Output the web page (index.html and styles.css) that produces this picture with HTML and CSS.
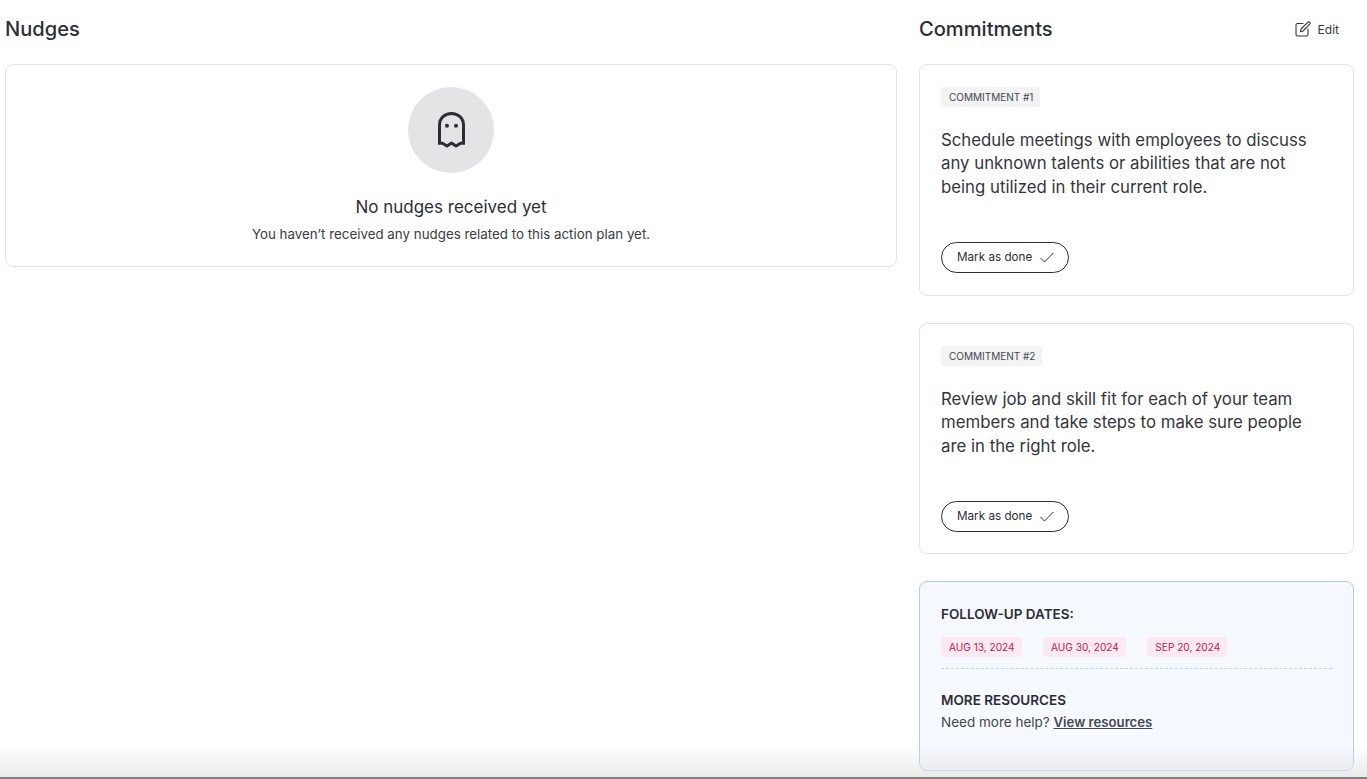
FILE: index.html
```html
<!DOCTYPE html>
<html lang="en">
<head>
<meta charset="utf-8">
<title>Action plan</title>
<link rel="stylesheet" href="styles.css">
</head>
<body>
<div class="page">
  <section class="col-left">
    <header class="col-head"><h2>Nudges</h2></header>
    <div class="card empty">
      <div class="ghost-wrap">
        <svg class="ghost" width="27" height="36" viewBox="0 0 27 36" fill="none">
          <path d="M1.500 32V13C1.500 6 7 1.500 13.500 1.500S25.500 6 25.500 13V32" stroke="#2b2e36" stroke-width="3"/>
          <path d="M0 31.300H4.500L9 34 13.500 31 18 34 22.500 31.300H27" stroke="#2b2e36" stroke-width="3" stroke-linejoin="round"/>
          <circle cx="9" cy="13.700" r="2" fill="#2b2e36"/>
          <circle cx="18" cy="13.700" r="2" fill="#2b2e36"/>
        </svg>
      </div>
      <h3>No nudges received yet</h3>
      <p>You haven’t received any nudges related to this action plan yet.</p>
    </div>
  </section>
  <section class="col-right">
    <header class="col-head">
      <h2>Commitments</h2>
      <a class="edit">
        <svg width="16" height="16" viewBox="0 0 16 16" fill="none" stroke="#33363d" stroke-width="1.100" stroke-linecap="round" stroke-linejoin="round">
          <path d="M8 2.500H2.500A1.500 1.500 0 0 0 1 4V13.500A1.500 1.500 0 0 0 2.500 15H11.500A1.500 1.500 0 0 0 13 13.500V8"/>
          <path d="M5.500 10.800L6 8 12.700 1.300A1.300 1.300 0 0 1 14.700 3.300L8 10Z"/>
        </svg>
        <span>Edit</span>
      </a>
    </header>
    <article class="card commitment">
      <span class="chip">COMMITMENT #1</span>
      <p class="body">Schedule meetings with employees to discuss any unknown talents or abilities that are not being utilized in their current role.</p>
      <button class="done">Mark as done
        <svg width="14" height="11" viewBox="0 0 14 11" fill="none" stroke="#2b2e36" stroke-width="1"><path d="M.5 6 4.500 10 13.500 .8"/></svg>
      </button>
    </article>
    <article class="card commitment">
      <span class="chip">COMMITMENT #2</span>
      <p class="body">Review job and skill fit for each of your team members and take steps to make sure people are in the right role.</p>
      <button class="done">Mark as done
        <svg width="14" height="11" viewBox="0 0 14 11" fill="none" stroke="#2b2e36" stroke-width="1"><path d="M.5 6 4.500 10 13.500 .8"/></svg>
      </button>
    </article>
    <aside class="card info">
      <h4>FOLLOW-UP DATES:</h4>
      <div class="dates">
        <span class="date">AUG 13, 2024</span>
        <span class="date">AUG 30, 2024</span>
        <span class="date">SEP 20, 2024</span>
      </div>
      <hr class="dash">
      <h4>MORE RESOURCES</h4>
      <p class="help">Need more help? <a class="link">View resources</a></p>
    </aside>
  </section>
</div>
<div class="bottom-shade"></div>
</body>
</html>
```
FILE: styles.css
```css
* { box-sizing: border-box; }
html, body { margin: 0; height: 100%; overflow: hidden; background: #fff; }
body { font-family: "Inter", "Liberation Sans", sans-serif; color: #2b2e36; }

.page { display: flex; gap: 22px; padding: 0 13px 0 5px; height: 779px; }
.col-left { width: 892px; flex: none; }
.col-right { width: 435px; flex: none; display: flex; flex-direction: column; }

.col-head { height: 64px; display: flex; align-items: center; justify-content: space-between; padding-bottom: 6px; }
.col-head h2 { margin: 0; font-size: 20.100px; font-weight: 500; line-height: 28px; color: #2b2e36; }

.edit { display: flex; align-items: center; gap: 7px; font-size: 12px; padding-right: 15px; color: #33363d; }

.card { border: 1px solid #e3e4e6; border-radius: 8px; background: #fff; }

.empty { height: 203px; padding-top: 22px; display: flex; flex-direction: column; align-items: center; }
.ghost-wrap { width: 86px; height: 86px; border-radius: 50%; background: #e4e4e6; display: flex; align-items: center; justify-content: center; }
.empty h3 { margin: 22.500px 0 0; font-size: 17px; font-weight: 400; line-height: 22px; color: #2b2e36; }
.empty p { margin: 7.500px 0 0; font-size: 13.350px; line-height: 18px; color: #3a3d44; }

.commitment { height: 232px; padding: 22px 21px 0; margin-bottom: 27px; display: flex; flex-direction: column; align-items: flex-start; }
.commitment + .commitment { height: 231px; }
.chip { height: 20px; padding: 0 7px 0 8px; border-radius: 3px; background: #f3f3f4; font-size: 10px; line-height: 20px; color: #44474e; }
.body { margin: 22px 0 0; width: 380px; height: 70px; font-size: 16.800px; line-height: 23.400px; color: #33363d; }
.done { margin-top: 43px; width: 128px; height: 31px; border: 1px solid #2b2e36; border-radius: 16px; background: #fff; padding: 0 0 1px 15px; display: flex; align-items: center; gap: 8px; font: inherit; font-size: 11.700px; color: #2b2e36; }

.info { height: 190px; padding: 23px 21px 0; background: #f6f9ff; border-color: #aecbf5; }
.info h4 { margin: 0; font-size: 13.500px; font-weight: 600; line-height: 18px; color: #2b2e36; }
.dates { display: flex; gap: 21.500px; margin-top: 14px; }
.date { height: 20px; padding: 0 7px 0 8px; border-radius: 3px; background: #fdeaf1; font-size: 10.100px; line-height: 20px; color: #c2185b; }
.dash { margin: 11px 0 22px; border: 0; border-top: 1px dashed #b5d6f5; }
.help { margin: 3px 0 0; font-size: 13.500px; line-height: 20px; color: #44474e; }
.link { font-size: 13.200px; font-weight: 600; text-decoration: underline; color: #44474e; }

.bottom-shade { position: absolute; left: 0; right: 0; bottom: 0; height: 34px; background: linear-gradient(to bottom, rgba(225,225,225,0), rgba(225,225,225,.7) 94%, #808080 94%); pointer-events: none; }
```
